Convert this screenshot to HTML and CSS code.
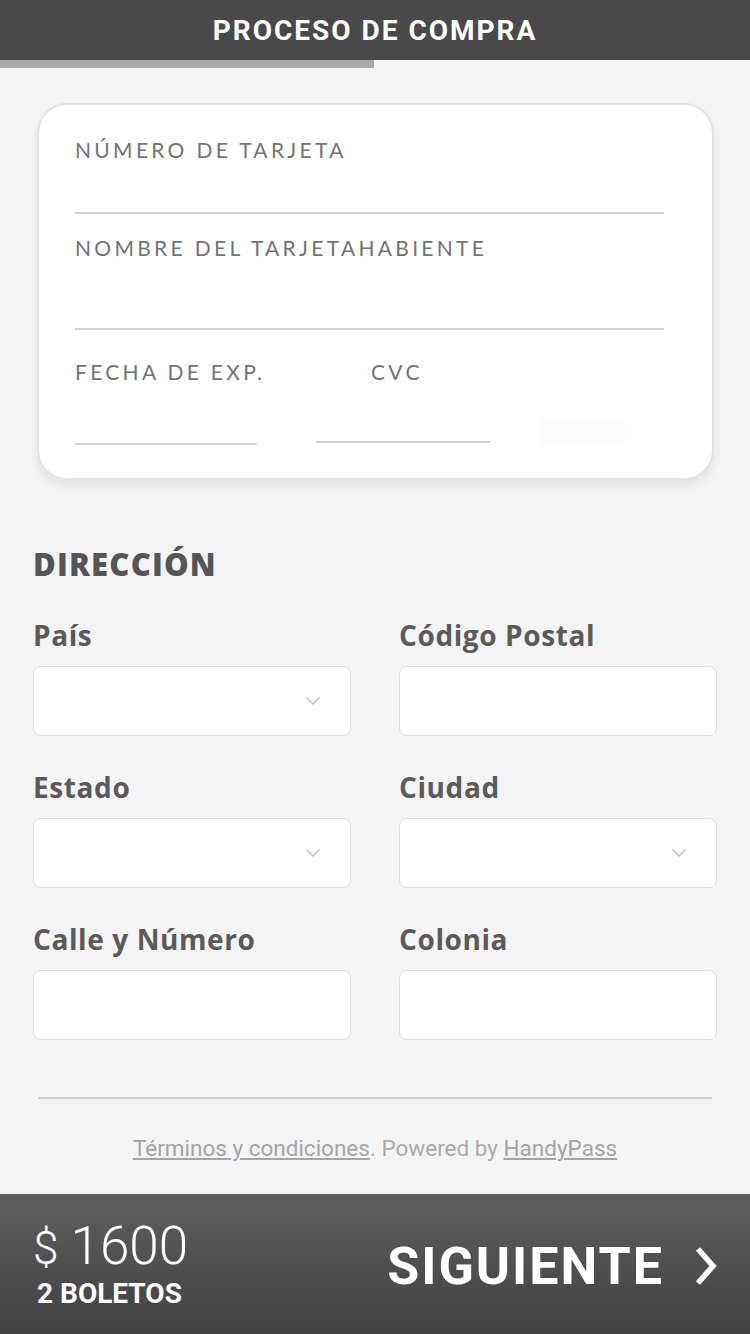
FILE: index.html
```html
<!DOCTYPE html>
<html lang="es">
<head>
<meta charset="utf-8">
<title>Proceso de compra</title>
<link rel="stylesheet" href="styles.css">
</head>
<body>
<div class="page">
  <header class="topbar">
    <h1 class="topbar-title">PROCESO DE COMPRA</h1>
  </header>
  <div class="progress"><div class="progress-fill" style="width:374px"></div></div>

  <main class="content">
    <section class="card">
      <div class="card-field field-1">
        <div class="card-label">NÚMERO DE TARJETA</div>
        <div class="card-line line-1"></div>
      </div>
      <div class="card-field field-2">
        <div class="card-label">NOMBRE DEL TARJETAHABIENTE</div>
        <div class="card-line line-2"></div>
      </div>
      <div class="card-field field-3">
        <div class="card-label-row">
          <div class="card-label label-exp">FECHA DE EXP.</div>
          <div class="card-label">CVC</div>
        </div>
        <div class="card-line-row">
          <div class="card-line line-exp"></div>
          <div class="card-line line-cvc"></div>
          <div class="card-ghost"></div>
        </div>
      </div>
    </section>

    <section class="address">
      <h2 class="address-title">DIRECCIÓN</h2>
      <div class="address-grid">
        <div class="field">
          <div class="field-label">País</div>
          <div class="field-box">
            <svg class="chev" width="16" height="10" viewBox="0 0 16 10"><path d="M1.5 1.5 L8 8 L14.5 1.5" fill="none" stroke="#b7bdcb" stroke-width="1.5"/></svg>
          </div>
        </div>
        <div class="field">
          <div class="field-label">Código Postal</div>
          <div class="field-box"></div>
        </div>
        <div class="field">
          <div class="field-label">Estado</div>
          <div class="field-box">
            <svg class="chev" width="16" height="10" viewBox="0 0 16 10"><path d="M1.5 1.5 L8 8 L14.5 1.5" fill="none" stroke="#b7bdcb" stroke-width="1.5"/></svg>
          </div>
        </div>
        <div class="field">
          <div class="field-label">Ciudad</div>
          <div class="field-box">
            <svg class="chev" width="16" height="10" viewBox="0 0 16 10"><path d="M1.5 1.5 L8 8 L14.5 1.5" fill="none" stroke="#b7bdcb" stroke-width="1.5"/></svg>
          </div>
        </div>
        <div class="field">
          <div class="field-label">Calle y Número</div>
          <div class="field-box"></div>
        </div>
        <div class="field">
          <div class="field-label">Colonia</div>
          <div class="field-box"></div>
        </div>
      </div>
    </section>

    <hr class="divider">
    <p class="legal"><a class="legal-link" href="#">Términos y condiciones</a>. Powered by <a class="legal-link" href="#">HandyPass</a></p>
  </main>

  <footer class="bottombar">
    <div class="total">
      <div class="price"><span class="currency">$</span><span class="amount">1600</span></div>
      <div class="tickets">2 BOLETOS</div>
    </div>
    <button class="next">
      <span class="next-text">SIGUIENTE</span>
      <svg class="next-chev" width="24" height="40" viewBox="0 0 24 40"><path d="M4 3 L19 20 L4 37" fill="none" stroke="#ffffff" stroke-width="5.5"/></svg>
    </button>
  </footer>
</div>
</body>
</html>
```
FILE: styles.css
```css
* { box-sizing: border-box; }
html, body { margin: 0; padding: 0; }
body {
  background: #f4f4f4;
  font-family: "Lato", "Liberation Sans", sans-serif;
}
.page {
  width: 750px;
  height: 1334px;
  display: flex;
  flex-direction: column;
  overflow: hidden;
}
.topbar {
  height: 60px;
  background: #494949;
  display: flex;
  align-items: center;
  justify-content: center;
}
.topbar-title {
  margin: 0;
  color: #ffffff;
  font-family: "Roboto", "Liberation Sans", sans-serif;
  font-weight: 700;
  font-size: 28px;
  letter-spacing: 2px;
}
.progress {
  height: 8px;
  background: #f4f4f4;
}
.progress-fill {
  height: 8px;
  background: #a9a9a9;
}
.content {
  flex: 1;
  display: flex;
  flex-direction: column;
}
.card {
  margin: 35px 36px 0 37px;
  background: #ffffff;
  border: 2px solid #e3e3e3;
  border-radius: 30px;
  box-shadow: 0 6px 10px rgba(0, 0, 0, 0.07);
  padding: 33px 48px 33px 36px;
  display: flex;
  flex-direction: column;
}
.field-2 { margin-top: 22px; }
.field-3 { margin-top: 30px; }
.card-label {
  font-size: 21px;
  line-height: 24px;
  color: #737373;
  letter-spacing: 3.3px;
}
.card-line {
  border-bottom: 2px solid #cfcfcf;
}
.line-1 { height: 52px; }
.line-2 { height: 70px; }
.card-label-row {
  display: flex;
}
.label-exp { width: 296px; }
.card-line-row {
  display: flex;
  align-items: flex-end;
  height: 61px;
}
.line-exp { width: 182px; height: 2px; }
.line-cvc { width: 174px; height: 2px; margin-left: 59px; margin-bottom: 2px; }
.card-ghost {
  width: 85px;
  height: 28px;
  margin-left: 50px;
  margin-bottom: -1px;
  background: #fafdf9;
}
.address {
  padding: 64px 33px 0 33px;
}
.address-title {
  margin: 0;
  font-family: "Open Sans", "Lato", sans-serif;
  font-weight: 800;
  font-size: 31px;
  line-height: 40px;
  color: #555555;
  letter-spacing: 1.2px;
}
.address-grid {
  margin-top: 34px;
  display: grid;
  grid-template-columns: 318px 318px;
  column-gap: 48px;
  row-gap: 34px;
}
.field-label {
  font-family: "Open Sans", "Lato", sans-serif;
  font-weight: 700;
  font-size: 28px;
  line-height: 34px;
  color: #5a5a5a;
  letter-spacing: 0.6px;
  margin-bottom: 14px;
}
.field-box {
  height: 70px;
  background: #ffffff;
  border: 1.5px solid #dedede;
  border-radius: 8px;
  display: flex;
  align-items: center;
  justify-content: flex-end;
  padding-right: 29px;
}
.chev { display: block; }
.divider {
  margin: 57px 38px 0 38px;
  border: 0;
  height: 2px;
  background: #d0d0d0;
}
.legal {
  margin: 34px 0 0 0;
  text-align: center;
  font-family: "Roboto", "Liberation Sans", sans-serif;
  font-size: 22.5px;
  line-height: 30px;
  color: #ababab;
}
.legal-link {
  color: #a4a4a4;
  text-decoration: underline;
}
.bottombar {
  height: 140px;
  background: linear-gradient(#5f5f5f, #404040);
  display: flex;
  align-items: center;
  justify-content: space-between;
  padding: 0 32px 0 33px;
  color: #ffffff;
  font-family: "Roboto", "Liberation Sans", sans-serif;
}
.total {
  display: flex;
  flex-direction: column;
  margin-top: 0;
}
.price {
  display: flex;
  align-items: baseline;
  font-weight: 300;
  font-size: 53px;
  line-height: 56px;
}
.currency {
  font-size: 46px;
  margin-right: 12px;
}
.tickets {
  font-weight: 700;
  font-size: 28px;
  line-height: 32px;
  margin-left: 4px;
  margin-top: 2px;
  letter-spacing: 0;
}
.next {
  background: none;
  border: 0;
  padding: 0;
  display: flex;
  align-items: center;
  gap: 30px;
  color: #ffffff;
  font-family: "Roboto", "Liberation Sans", sans-serif;
  margin-top: 4px;
}
.next-text {
  font-weight: 700;
  font-size: 52px;
  letter-spacing: 2px;
}
.next-chev { display: block; }
```
